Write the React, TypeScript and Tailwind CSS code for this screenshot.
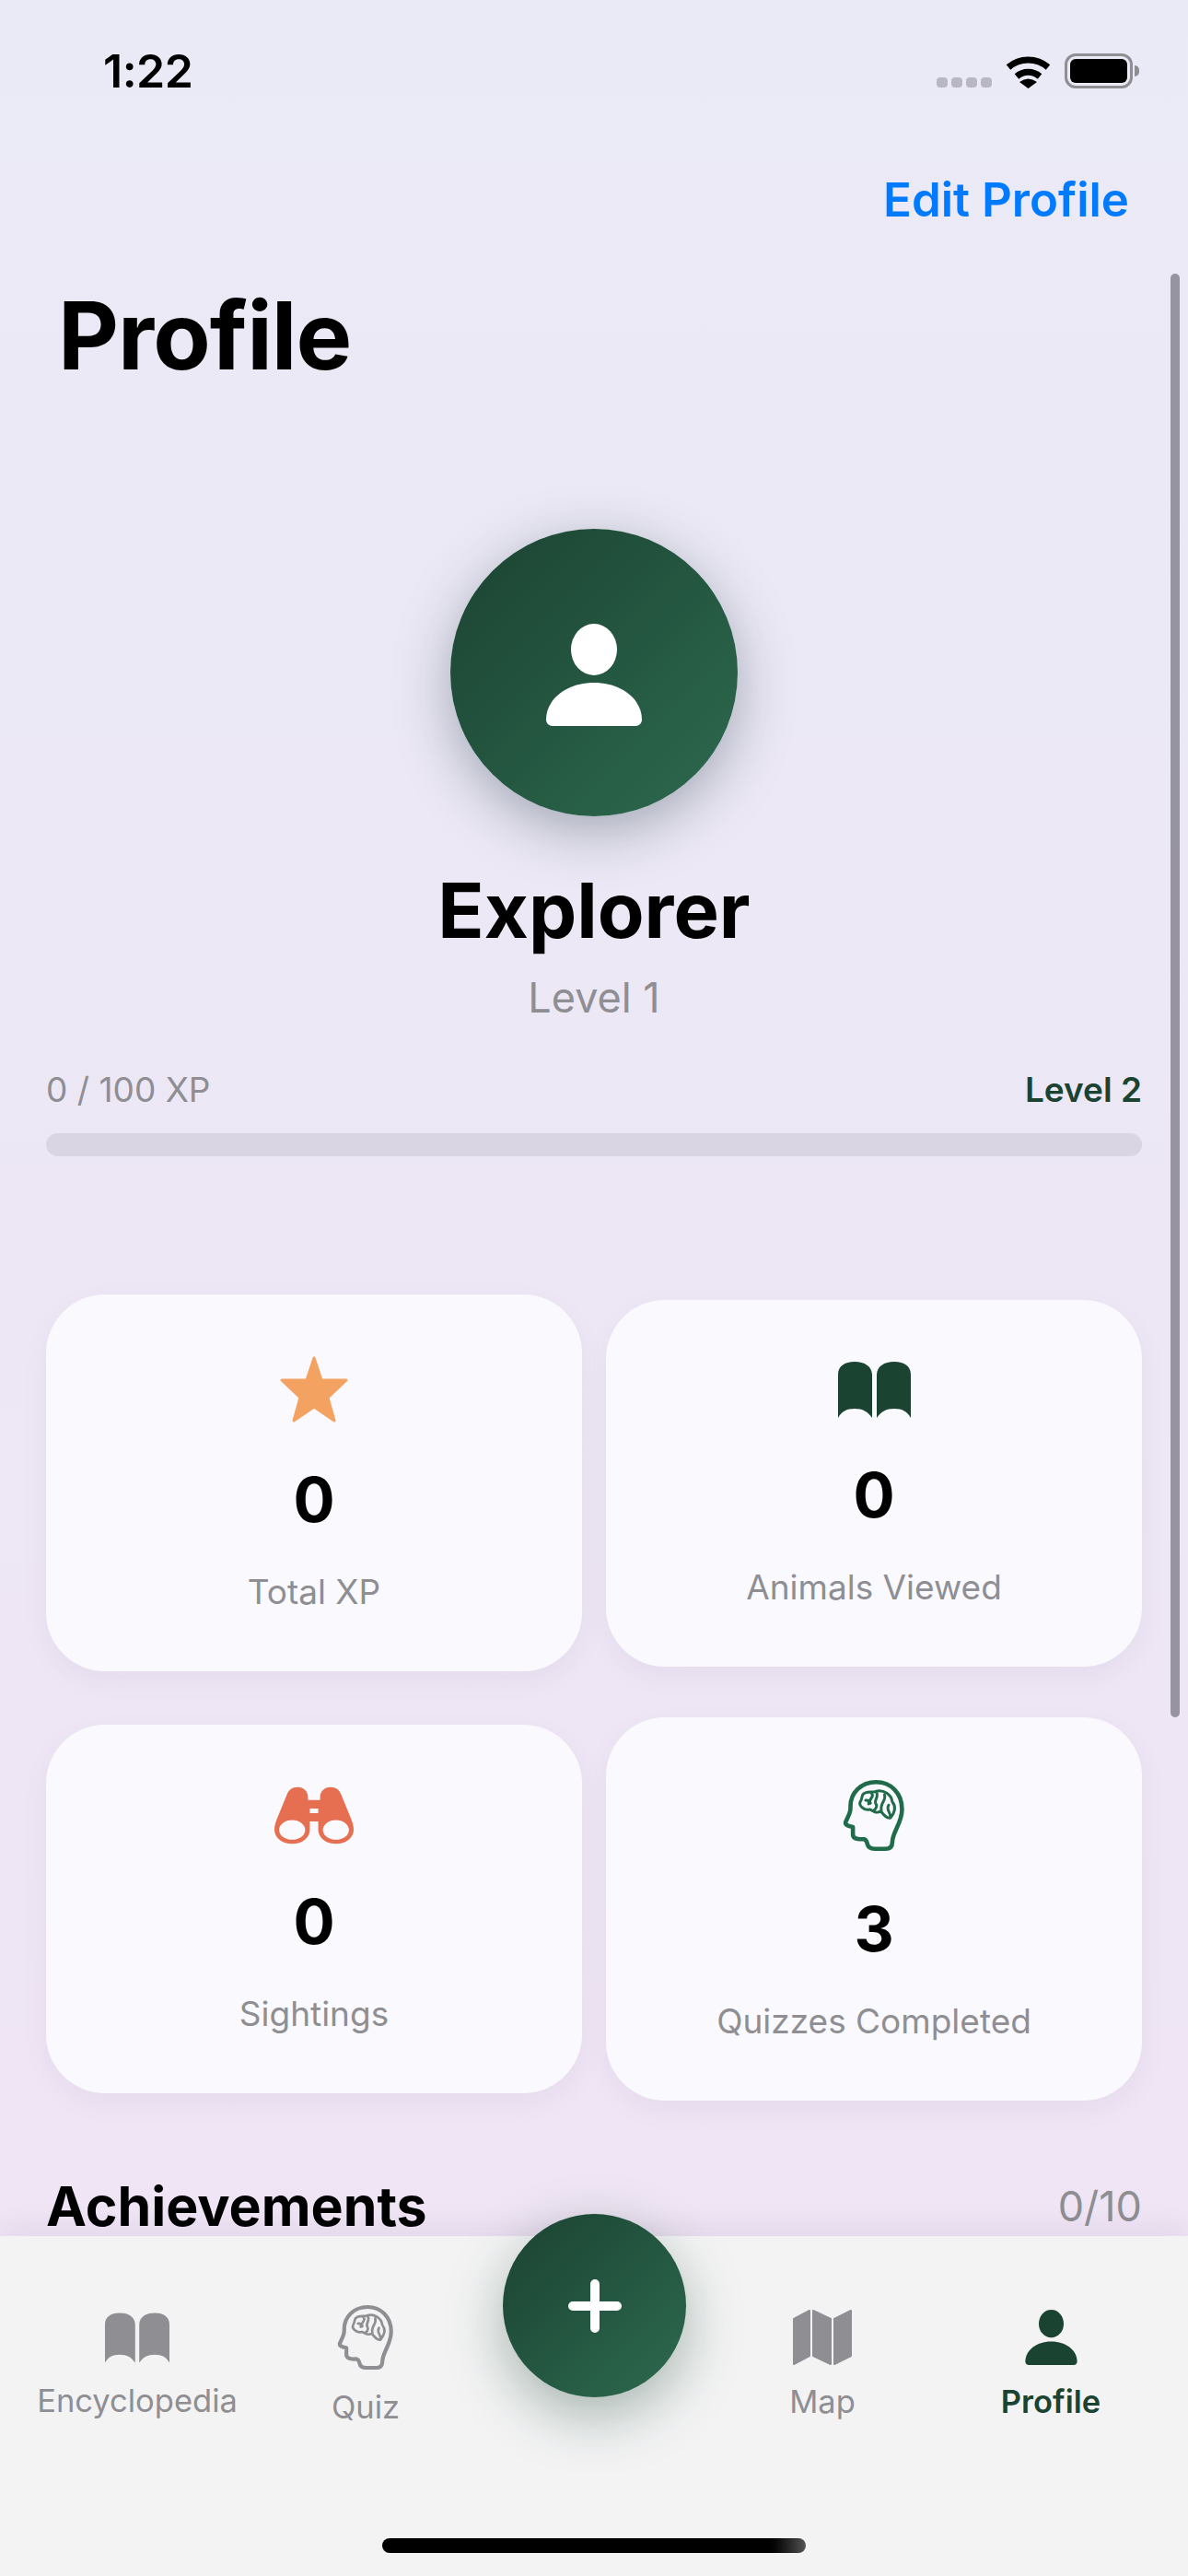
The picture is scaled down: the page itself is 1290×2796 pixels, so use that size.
import type { ReactNode } from "react";

const GRAY = "#8e8e93";
const GREEN = "#1b4332";

const PersonIcon = ({ className, fill }: { className: string; fill: string }) => (
  <svg viewBox="0 0 104 111" className={className} fill={fill}>
    <ellipse cx="52" cy="28" rx="25" ry="28" />
    <path d="M0 104C0 82 22 64 52 64S104 82 104 104C104 108 101 111 97 111H7C3 111 0 108 0 104Z" />
  </svg>
);

const BookIcon = ({ className, fill }: { className: string; fill: string }) => (
  <svg viewBox="0 0 79 61" className={className} fill={fill}>
    <path d="M0 61V14C0 5 7 0 18 0S36.5 5 37 14V61C32 54 27 51 18 51S4 54 0 61Z" />
    <path d="M79 61V14C79 5 72 0 61 0S42.5 5 42 14V61C47 54 52 51 61 51S75 54 79 61Z" />
  </svg>
);

const StarIcon = () => (
  <svg viewBox="0 0 74 72" className="w-[74px] h-[72px]" fill="#f4a261" stroke="#f4a261" strokeWidth="3" strokeLinejoin="round">
    <path d="M37 2L45 26H72L52 45L59 70L37 55L15 70L22 45L2 26H29Z" />
  </svg>
);

const BinocularsIcon = () => (
  <svg viewBox="0 0 85 61" className="w-[86px] h-[63px]" fill="#e76f51" fillRule="evenodd">
    <path d="M0 46C0 42 1 39 2 36L13 9C15 3 19 0 25 0C31 0 36 4 36 11V14H49V11C49 4 54 0 60 0C66 0 70 3 72 9L83 36C84 39 85 42 85 46A19 15 0 0 1 47 46V37H38V46A19 15 0 0 1 0 46ZM5 46A14 10.5 0 1 0 33 46A14 10.5 0 1 0 5 46ZM52 46A14 10.5 0 1 0 80 46A14 10.5 0 1 0 52 46ZM38 23V28H47V23Z" />
  </svg>
);

const BrainHeadIcon = ({ className, stroke }: { className: string; stroke: string }) => (
  <svg viewBox="105 90 205 240" className={className} fill="none" stroke={stroke} strokeLinejoin="round" strokeLinecap="round">
    <path
      strokeWidth="14"
      d="M268 298C268 265 300 235 300 190C300 135 262 100 215 100C165 100 130 135 130 180C130 190 131 195 126 205L114 232C112 240 120 245 138 248V272C138 285 150 290 172 288C180 288 184 296 186 305C188 315 196 320 210 320H245C260 320 268 312 268 298Z"
    />
    <path
      strokeWidth="9"
      d="M170 142C182 126 205 137 215 130C240 125 265 140 268 165C285 185 272 205 262 218C250 222 240 208 230 196C215 205 205 196 195 190C175 196 152 176 165 160ZM200 138C212 148 186 156 196 170M215 132C226 150 205 160 214 172C220 180 212 190 206 194M242 142C250 160 226 168 232 194M256 176C246 190 262 198 262 216M180 160C188 158 192 164 190 172"
    />
  </svg>
);

const MapIcon = () => (
  <svg viewBox="0 0 64 60" className="w-[64px] h-[60px]" fill={GRAY} stroke={GRAY} strokeWidth="2" strokeLinejoin="round">
    <path d="M1 10L18 1V50L1 59Z" />
    <path d="M22 1L41 10V59L22 50Z" />
    <path d="M45 10L63 1V50L45 59Z" />
  </svg>
);

const WifiIcon = () => (
  <svg viewBox="0 0 49 37" className="w-[49px] h-[37px]" fill="none" stroke="#000">
    <path strokeWidth="7" d="M3 14A33 33 0 0 1 46 14" />
    <path strokeWidth="7" d="M12 24A19 19 0 0 1 37 24" />
    <path fill="#000" stroke="none" d="M15 30Q24.5 23 34 30L24.5 37Z" />
  </svg>
);

const StatusBar = () => (
  <div className="flex items-center justify-between h-[38px] mt-[58px] pl-[112px] pr-[53px]">
    <span className="text-[50px] leading-none font-semibold text-black tracking-[-0.5px]">1:22</span>
    <div className="flex items-end gap-[15px]">
      <div className="flex gap-[4px] mb-[1px]">
        <span className="w-[12px] h-[11px] rounded-[4px] bg-[#bab7c4]" />
        <span className="w-[12px] h-[11px] rounded-[4px] bg-[#bab7c4]" />
        <span className="w-[12px] h-[11px] rounded-[4px] bg-[#bab7c4]" />
        <span className="w-[12px] h-[11px] rounded-[4px] bg-[#bab7c4]" />
      </div>
      <WifiIcon />
      <div className="flex items-center gap-[2px]">
        <div className="w-[74px] h-[38px] rounded-[12px] border-[3px] border-[#8e8e93] p-[3px]">
          <div className="w-full h-full rounded-[6px] bg-black" />
        </div>
        <span className="w-[5px] h-[12px] rounded-r-full bg-[#8e8e93]" />
      </div>
    </div>
  </div>
);

const StatCard = ({ icon, value, label }: { icon: ReactNode; value: string; label: string }) => (
  <div className="flex-1 flex flex-col items-center pt-[67px] pb-[64px] rounded-[64px] bg-[#faf9fe] shadow-[0_10px_30px_rgba(60,40,90,0.05)]">
    {icon}
    <span className="mt-[48px] text-[67px] leading-[72px] font-bold text-black">{value}</span>
    <span className="mt-[42px] text-[37px] leading-[44px] text-[#8e8e93]">{label}</span>
  </div>
);

const TabItem = ({ icon, label, active }: { icon: ReactNode; label: string; active?: boolean }) => (
  <div className="w-[248px] flex flex-col items-center">
    {icon}
    <span className={active ? "mt-[20px] text-[34.5px] leading-[40px] font-semibold text-[#1b4332]" : "mt-[20px] text-[34.5px] leading-[40px] text-[#8e8e93]"}>
      {label}
    </span>
  </div>
);

export default function App() {
  return (
    <div className="relative w-[1290px] h-[2796px] overflow-hidden flex flex-col bg-gradient-to-b from-[#eaeaf6] to-[#f0e4f4] font-['Inter',sans-serif]">
      <StatusBar />

      <div className="flex justify-end pr-[64px] mt-[96px]">
        <span className="text-[51px] leading-[50px] font-semibold text-[#007aff]">Edit Profile</span>
      </div>

      <main className="flex-1 flex flex-col px-[50px]">
        <h1 className="mt-[67px] ml-[13px] text-[102px] leading-[110px] font-bold text-black tracking-[-1px]">Profile</h1>

        <div className="mt-[155px] flex flex-col items-center">
          <div className="w-[312px] h-[312px] rounded-full bg-gradient-to-br from-[#1b4332] to-[#2d6a4f] flex items-center justify-center shadow-[0_16px_60px_rgba(27,50,60,0.35)]">
            <PersonIcon className="w-[104px] h-[111px] mb-[-4px]" fill="#ffffff" />
          </div>
          <span className="mt-[52px] text-[83px] leading-[100px] font-bold text-black">Explorer</span>
          <span className="mt-[17px] text-[45px] leading-[56px] text-[#8e8e93]">Level 1</span>
        </div>

        <div className="mt-[50px] flex items-center justify-between">
          <span className="text-[37px] leading-[44px] text-[#8e8e93]">0 / 100 XP</span>
          <span className="text-[37px] leading-[44px] font-semibold text-[#1b4332]">Level 2</span>
        </div>
        <div className="mt-[25px] h-[25px] shrink-0 rounded-full bg-[#d9d5e3]" />

        <div className="mt-[150px] flex items-center gap-[26px]">
          <StatCard icon={<StarIcon />} value="0" label="Total XP" />
          <StatCard icon={<BookIcon className="w-[79px] h-[61px]" fill={GREEN} />} value="0" label="Animals Viewed" />
        </div>
        <div className="mt-[50px] flex items-center gap-[26px]">
          <StatCard icon={<BinocularsIcon />} value="0" label="Sightings" />
          <StatCard icon={<BrainHeadIcon className="w-[68px] h-[79px]" stroke="#1f6b4a" />} value="3" label="Quizzes Completed" />
        </div>

        <div className="mt-[85px] flex items-center justify-between">
          <span className="text-[59px] leading-[60px] font-bold text-black">Achievements</span>
          <span className="text-[45px] leading-[56px] text-[#8e8e93]">0/10</span>
        </div>
      </main>

      <nav className="h-[369px] shrink-0 bg-[#f3f3f4] shadow-[0_-8px_30px_rgba(60,30,80,0.07)] flex flex-col items-center">
        <div className="mt-[74px] flex items-center justify-center">
          <TabItem icon={<BookIcon className="w-[70px] h-[57px]" fill={GRAY} />} label="Encyclopedia" />
          <TabItem icon={<BrainHeadIcon className="w-[62px] h-[72px]" stroke={GRAY} />} label="Quiz" />
          <div className="w-[248px]" />
          <TabItem icon={<MapIcon />} label="Map" />
          <TabItem icon={<PersonIcon className="w-[57px] h-[60px]" fill={GREEN} />} label="Profile" active />
        </div>
        <div className="mt-auto mb-[25px] w-[460px] h-[16px] rounded-full bg-gradient-to-r from-black from-90% to-[#555555]" />
      </nav>

      {/* floating add button */}
      <div className="absolute left-[546px] top-[2403px] w-[199px] h-[199px] rounded-full bg-gradient-to-br from-[#1b4332] to-[#2d6a4f] flex items-center justify-center shadow-[0_20px_60px_rgba(27,67,50,0.35)]">
        <svg viewBox="0 0 58 58" className="w-[58px] h-[58px]" fill="none" stroke="#ffffff" strokeWidth="10" strokeLinecap="round">
          <path d="M29 5V53M5 29H53" />
        </svg>
      </div>

      {/* scroll indicator */}
      <div className="absolute right-[9px] top-[297px] w-[10px] h-[1567px] rounded-full bg-[#96949f]" />
    </div>
  );
}
